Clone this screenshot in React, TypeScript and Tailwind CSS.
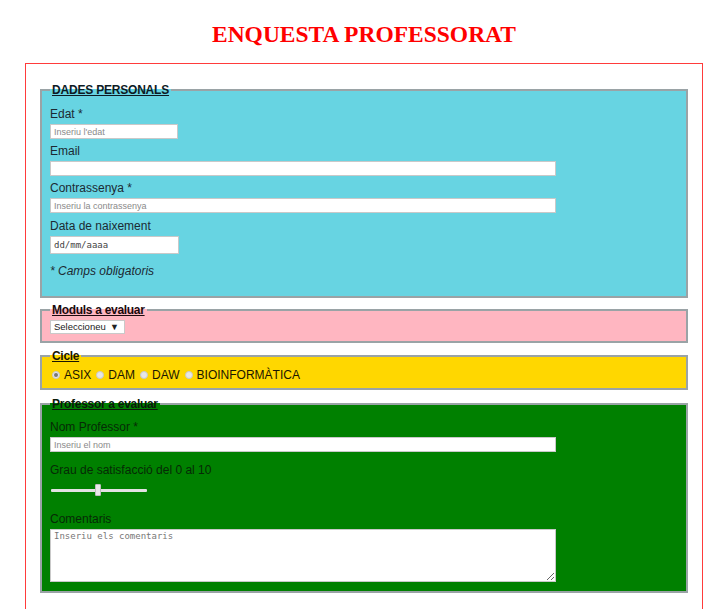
import React from "react";

const font = { fontFamily: '"Liberation Sans", Arial, sans-serif' };

function Radio({ checked, label }: { checked?: boolean; label: string }) {
  return (
    <span className="inline-flex items-center mr-[5px]">
      <span className="w-[8px] h-[8px] rounded-full bg-[#e6e6e6] border border-[#c8c8c8] flex items-center justify-center mr-[4px]">
        {checked && <span className="w-[4px] h-[4px] rounded-full bg-[#777]" />}
      </span>
      <span>{label}</span>
    </span>
  );
}

export default function App() {
  return (
    <div className="bg-white min-h-[609px] overflow-hidden" style={font}>
      <div className="ml-[25px] w-[678px]">
        <h1 className="pt-[20px] text-center text-[23.5px] leading-[28px] font-bold text-[#ff0000] [font-family:'Liberation_Serif',serif]">
          ENQUESTA PROFESSORAT
        </h1>
        <div className="mt-[15px] border border-[#ff3b3b] px-[14px] pt-[19px] pb-[20px] text-[12px] leading-[14px]">
          {/* DADES PERSONALS */}
          <fieldset className="border-2 border-[#9aa3a6] bg-[#67d4e2] pl-[8px] pr-[8px] pt-[10px] pb-[18px] text-[#1c2a33]">
            <legend className="px-[2px] underline text-[12px] leading-[14px] font-bold tracking-[-0.2px] text-[#0d1a24]">DADES PERSONALS</legend>
            <div className="mb-[3px]">Edat *</div>
            <input
              placeholder="Inseriu l'edat"
              className="block w-[128px] h-[15px] bg-white border border-[#c9c9c9] px-[3px] text-[9px] placeholder:text-[#8a8a8a] outline-none mb-[5px]"
            />
            <div className="mb-[3px]">Email</div>
            <input className="block w-[506px] h-[15px] bg-white border border-[#c9c9c9] px-[3px] text-[9px] outline-none mb-[5px]" />
            <div className="mb-[3px]">Contrassenya *</div>
            <input
              placeholder="Inseriu la contrassenya"
              className="block w-[506px] h-[15px] bg-white border border-[#c9c9c9] px-[3px] text-[9px] placeholder:text-[#8a8a8a] outline-none mb-[6px]"
            />
            <div className="mb-[3px]">Data de naixement</div>
            <input
              placeholder="dd/mm/aaaa"
              className="block w-[129px] h-[18px] bg-white border border-[#c9c9c9] px-[3px] text-[9px] placeholder:text-[#444] outline-none [font-family:'DejaVu_Sans_Mono',monospace]"
            />
            <div className="mt-[10px] italic">* Camps obligatoris</div>
          </fieldset>

          {/* Moduls */}
          <fieldset className="mt-[5px] border-2 border-[#9aa3a6] bg-[#ffb6c1] pl-[8px] pr-[8px] pt-[3px] pb-[7px]">
            <legend className="px-[2px] underline text-[12px] leading-[14px] font-bold tracking-[-0.3px] text-[#1a0a0d]">Moduls a evaluar</legend>
            <div className="w-[75px] h-[14px] bg-white border border-[#c9c9c9] flex items-center justify-between pl-[3px] pr-[5px] text-[9.5px] leading-[12px] text-[#222]">
              <span>Seleccioneu</span>
              <span className="text-[9px]">▼</span>
            </div>
          </fieldset>

          {/* Cicle */}
          <fieldset className="mt-[6px] border-2 border-[#9aa3a6] bg-[#ffd700] pl-[2px] pr-[8px] pt-[5px] pb-[6px] text-[#1a1600]">
            <legend className="ml-[6px] px-[2px] underline text-[12px] leading-[14px] font-bold tracking-[-0.3px]">Cicle</legend>
            <div className="flex items-center pl-[8px]">
              <Radio checked label="ASIX" />
              <Radio label="DAM" />
              <Radio label="DAW" />
              <Radio label="BIOINFORMÀTICA" />
            </div>
          </fieldset>

          {/* Professor */}
          <fieldset className="mt-[7px] border-2 border-[#9aa3a6] bg-[#008000] pl-[8px] pr-[8px] pt-[9px] pb-[9px] text-[#062a06]">
            <legend className="px-[2px] underline text-[12px] leading-[14px] font-bold tracking-[-0.3px] text-[#0a1a0a]">Professor a evaluar</legend>
            <div className="mb-[3px]">Nom Professor *</div>
            <input
              placeholder="Inseriu el nom"
              className="block w-[506px] h-[15px] bg-white border border-[#c9c9c9] px-[3px] text-[9px] placeholder:text-[#8a8a8a] outline-none"
            />
            <div className="mt-[11px]">Grau de satisfacció del 0 al 10</div>
            <div className="mt-[7px] flex items-center h-[12px] w-[96px] ml-[1px]">
              <div className="w-[44px] h-[3px] bg-[#e2e2e2] rounded-l-[1px]" />
              <div className="w-[6px] h-[12px] bg-[#e9e9e9] border border-[#bdbdbd] rounded-[1px]" />
              <div className="w-[46px] h-[3px] bg-[#e2e2e2] rounded-r-[1px]" />
            </div>
            <div className="mt-[16px] mb-[3px]">Comentaris</div>
            <textarea
              placeholder="Inseriu els comentaris"
              className="block w-[506px] h-[53px] bg-white border border-[#c9c9c9] px-[3px] py-[1px] text-[9px] leading-[11px] placeholder:text-[#777] outline-none [font-family:'DejaVu_Sans_Mono',monospace]"
            />
          </fieldset>
        </div>
      </div>
    </div>
  );
}
